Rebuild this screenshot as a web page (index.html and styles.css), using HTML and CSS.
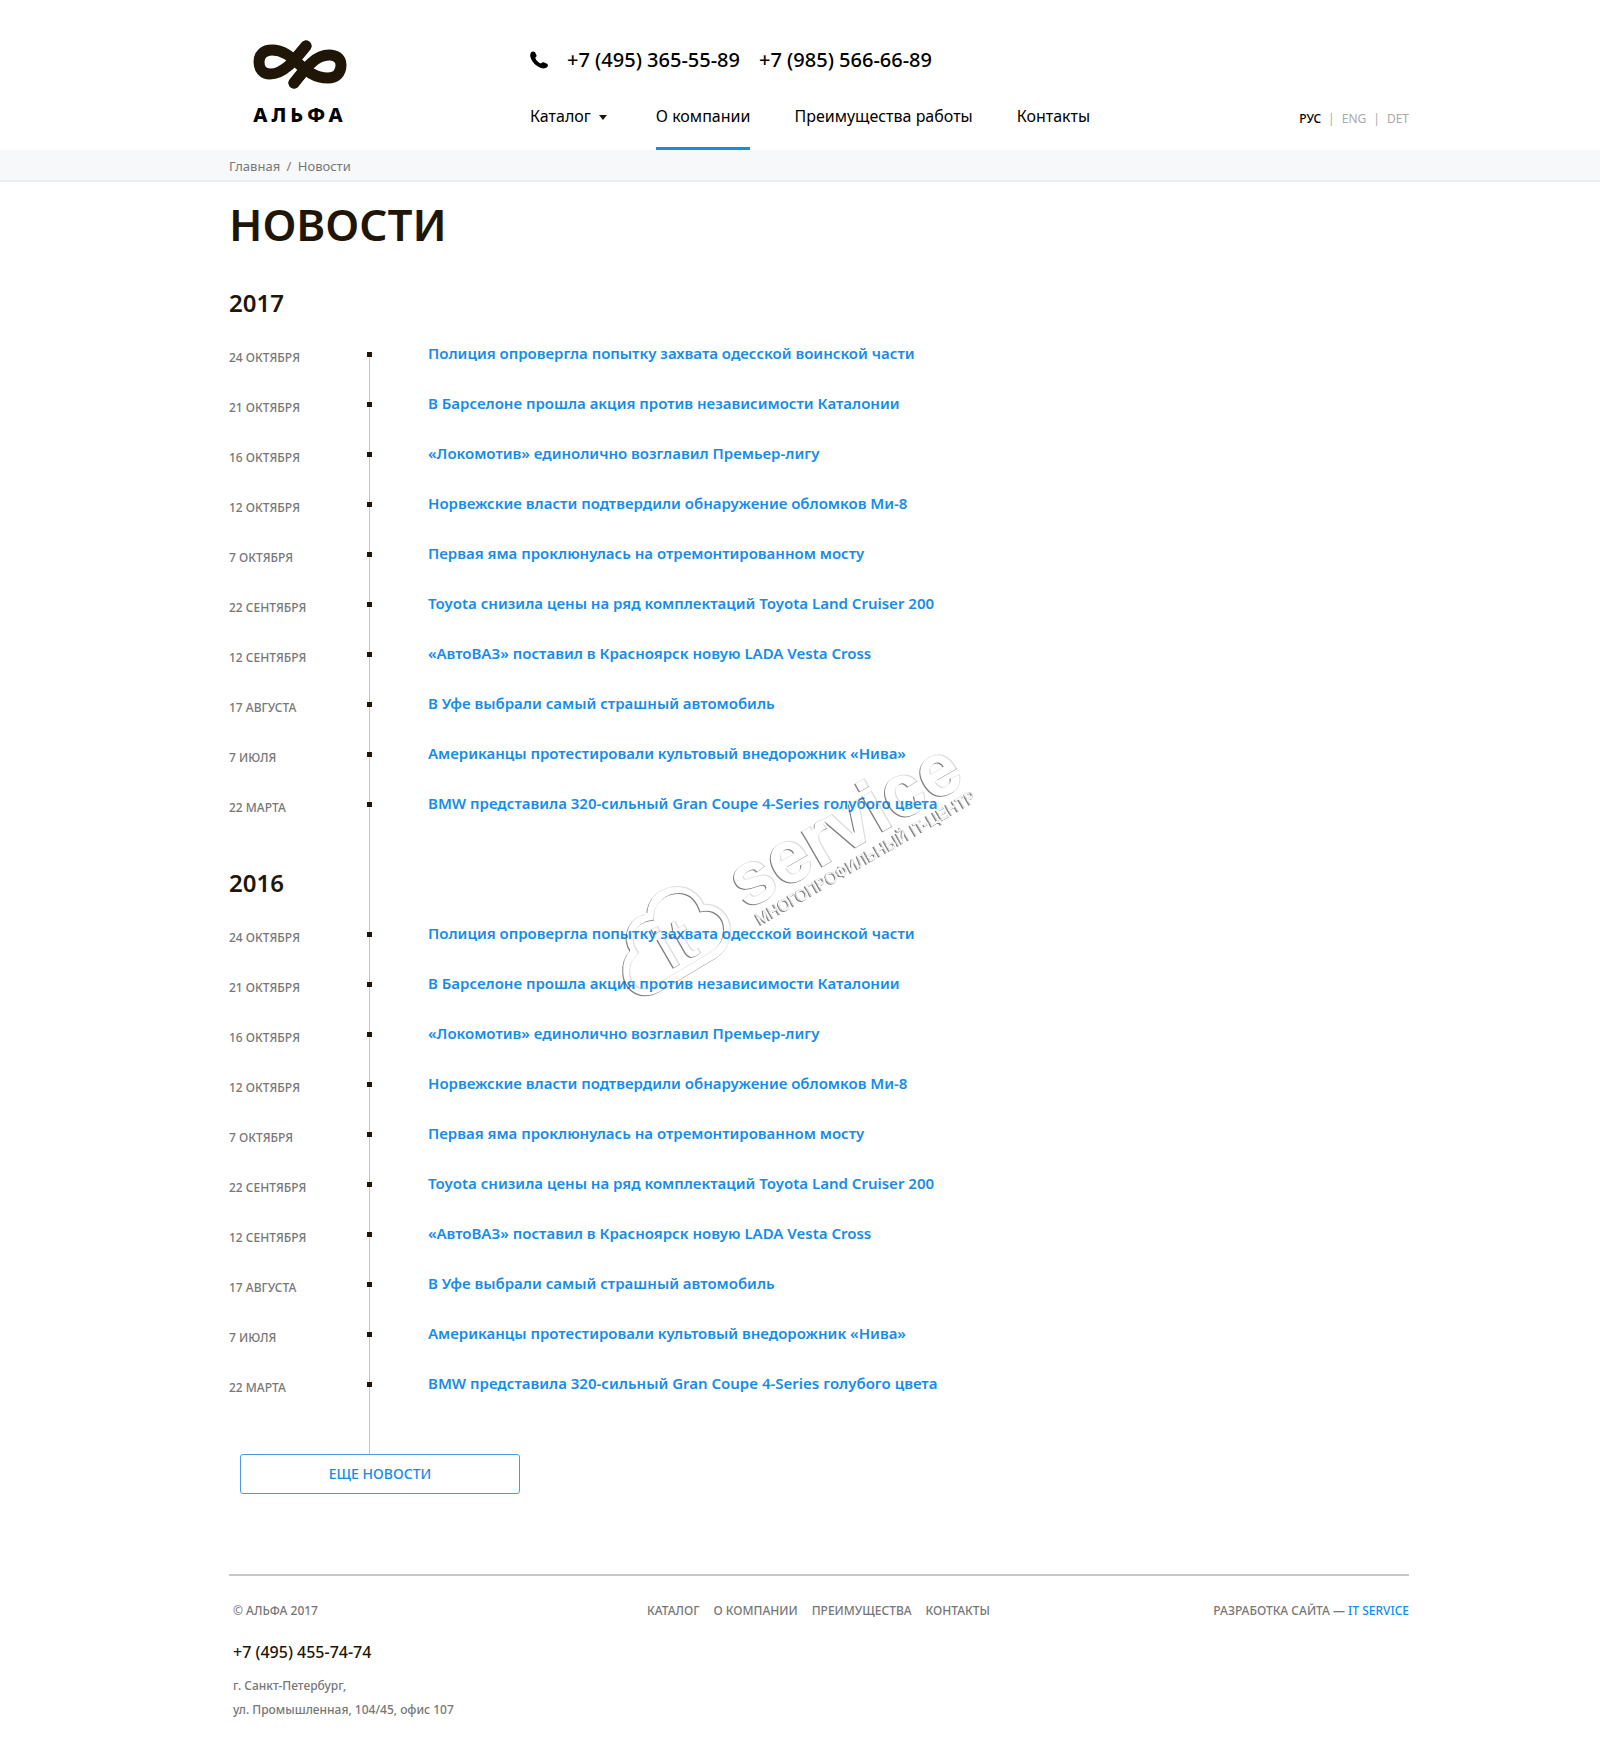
FILE: index.html
```
<!DOCTYPE html>
<html lang="ru">
<head>
    <meta charset="UTF-8">
    <meta name="viewport" content="width=device-width, initial-scale=1.0">
    <title>Новости — Альфа</title>
    <link rel="stylesheet" href="styles.css">
</head>
<body>
    <header class="container header">
        <a class="logo" href="#">
            <svg class="logo-mark" viewBox="0 0 94 49" aria-hidden="true">
                <path d="M53 6 L41 20 M53 28 L41 43" />
                <path d="M53 6 C42 20 31 34 17 34 C10 34 6 29 6 22 C6 14 11 10 19 10 C42 10 49 38 75 38 C83 38 88 33 88 25 C88 18 83 15 76 15 C62 15 52 29 41 43" />
            </svg>
            <span class="logo-text">АЛЬФА</span>
        </a>
        <div class="header-main">
            <div class="phones">
                <svg class="phone-icon" viewBox="0 0 18 18" aria-hidden="true">
                    <path d="M1 1.5C2 .2 4 0 5 1.3L6.4 4C6.9 5 6.4 6 5.2 6.8C6 9.5 8.500 11.800 11 12.600C11.800 11.500 12.700 11 13.700 11.300L17 12.800C18.300 13.600 18.200 15 17.200 16C15.500 17.700 13 17.800 10.500 16.800C6 15 2 11 .6 6.500C0 4.500.1 2.700 1 1.500Z" />
                </svg>
                <a href="tel:+74953655589">+7 (495) 365-55-89</a>
                <a href="tel:+79855666689">+7 (985) 566-66-89</a>
            </div>
            <nav class="menu">
                <a class="has-sub" href="#">Каталог</a>
                <a class="active" href="#">О компании</a>
                <a href="#">Преимущества работы</a>
                <a href="#">Контакты</a>
            </nav>
        </div>
        <div class="langs">
            <a class="current" href="#">РУС</a>
            <span>|</span>
            <a href="#">ENG</a>
            <span>|</span>
            <a href="#">DET</a>
        </div>
    </header>

    <div class="crumbs">
        <div class="container">
            <a href="#">Главная</a> <span class="sep">/</span> <span>Новости</span>
        </div>
    </div>

    <main class="container news">
        <h1>НОВОСТИ</h1>

        <div class="timeline">
            <section>
                <h2>2017</h2>
                <ul class="news-list">
                    <li><time>24 ОКТЯБРЯ</time><a href="#">Полиция опровергла попытку захвата одесской воинской части</a></li>
                    <li><time>21 ОКТЯБРЯ</time><a href="#">В Барселоне прошла акция против независимости Каталонии</a></li>
                    <li><time>16 ОКТЯБРЯ</time><a href="#">«Локомотив» единолично возглавил Премьер-лигу</a></li>
                    <li><time>12 ОКТЯБРЯ</time><a href="#">Норвежские власти подтвердили обнаружение обломков Ми-8</a></li>
                    <li><time>7 ОКТЯБРЯ</time><a href="#">Первая яма проклюнулась на отремонтированном мосту</a></li>
                    <li><time>22 СЕНТЯБРЯ</time><a href="#">Toyota снизила цены на ряд комплектаций Toyota Land Cruiser 200</a></li>
                    <li><time>12 СЕНТЯБРЯ</time><a href="#">«АвтоВАЗ» поставил в Красноярск новую LADA Vesta Cross</a></li>
                    <li><time>17 АВГУСТА</time><a href="#">В Уфе выбрали самый страшный автомобиль</a></li>
                    <li><time>7 ИЮЛЯ</time><a href="#">Американцы протестировали культовый внедорожник «Нива»</a></li>
                    <li><time>22 МАРТА</time><a href="#">BMW представила 320-сильный Gran Coupe 4-Series голубого цвета</a></li>
                </ul>
            </section>
            <section>
                <h2>2016</h2>
                <ul class="news-list">
                    <li><time>24 ОКТЯБРЯ</time><a href="#">Полиция опровергла попытку захвата одесской воинской части</a></li>
                    <li><time>21 ОКТЯБРЯ</time><a href="#">В Барселоне прошла акция против независимости Каталонии</a></li>
                    <li><time>16 ОКТЯБРЯ</time><a href="#">«Локомотив» единолично возглавил Премьер-лигу</a></li>
                    <li><time>12 ОКТЯБРЯ</time><a href="#">Норвежские власти подтвердили обнаружение обломков Ми-8</a></li>
                    <li><time>7 ОКТЯБРЯ</time><a href="#">Первая яма проклюнулась на отремонтированном мосту</a></li>
                    <li><time>22 СЕНТЯБРЯ</time><a href="#">Toyota снизила цены на ряд комплектаций Toyota Land Cruiser 200</a></li>
                    <li><time>12 СЕНТЯБРЯ</time><a href="#">«АвтоВАЗ» поставил в Красноярск новую LADA Vesta Cross</a></li>
                    <li><time>17 АВГУСТА</time><a href="#">В Уфе выбрали самый страшный автомобиль</a></li>
                    <li><time>7 ИЮЛЯ</time><a href="#">Американцы протестировали культовый внедорожник «Нива»</a></li>
                    <li><time>22 МАРТА</time><a href="#">BMW представила 320-сильный Gran Coupe 4-Series голубого цвета</a></li>
                </ul>
            </section>
        </div>
        <button class="more" type="button">ЕЩЕ НОВОСТИ</button>

        <!-- watermark -->
        <svg class="watermark" viewBox="0 0 400 280">
            <defs>
                <filter id="emboss" x="-10%" y="-10%" width="120%" height="120%">
                    <feOffset in="SourceAlpha" dx="1" dy="-1" result="up" />
                    <feComposite in="SourceAlpha" in2="up" operator="out" result="dark" />
                    <feFlood flood-color="#555" flood-opacity=".75" />
                    <feComposite in2="dark" operator="in" result="darkEdge" />
                    <feOffset in="SourceAlpha" dx="-1" dy="1" result="down" />
                    <feComposite in="SourceAlpha" in2="down" operator="out" result="light" />
                    <feFlood flood-color="#bbb" flood-opacity=".5" />
                    <feComposite in2="light" operator="in" result="lightEdge" />
                    <feMerge>
                        <feMergeNode in="lightEdge" />
                        <feMergeNode in="darkEdge" />
                    </feMerge>
                </filter>
            </defs>
            <g filter="url(#emboss)">
                <path class="cloud" d="M38 259C24 253 22 232 34 220C24 204 32 188 50 185C50 168 64 158 78 158C90 158 98 166 102 176C116 174 127 184 127 198C127 210 122 218 112 224L60 255C52 260 45 262 38 259Z" />
                <text class="wm-it" transform="translate(69 239) rotate(-30)">it</text>
                <text class="wm-name" transform="translate(146 178) rotate(-30)">service</text>
                <text class="wm-tag" transform="translate(159 194) rotate(-30)">МНОГОПРОФИЛЬНЫЙ IT-ЦЕНТР</text>
            </g>
        </svg>
    </main>

    <footer class="container footer">
        <div class="footer-about">
            <p>© АЛЬФА 2017</p>
            <a class="footer-phone" href="tel:+74954557474">+7 (495) 455-74-74</a>
            <address>г. Санкт-Петербург,<br>ул. Промышленная, 104/45, офис 107</address>
        </div>
        <nav class="footer-menu">
            <a href="#">КАТАЛОГ</a>
            <a href="#">О КОМПАНИИ</a>
            <a href="#">ПРЕИМУЩЕСТВА</a>
            <a href="#">КОНТАКТЫ</a>
        </nav>
        <p class="dev">РАЗРАБОТКА САЙТА — <a href="#">IT SERVICE</a></p>
    </footer>
</body>
</html>
```
FILE: styles.css
```
* {
    box-sizing: border-box;
}

body {
    margin: 0;
    background: #fff;
    color: #000;
    font-family: "Noto Sans", "Open Sans", sans-serif;
    font-size: 16px;
}

a {
    color: inherit;
    text-decoration: none;
}

p, h1, h2, ul {
    margin: 0;
    padding: 0;
}

.container {
    width: 100%;
    max-width: 1180px;
    margin: 0 auto;
}

/* the content column sits a little to the right of the centre */
.header, .news, .footer, .crumbs .container {
    position: relative;
    left: 19px;
}

/* header */
.header {
    display: grid;
    grid-template-columns: 301px 1fr auto;
    height: 150px;
}

.logo {
    width: 94px;
    margin: 40px 0 0 24px;
}

.logo-mark {
    display: block;
    width: 94px;
    height: 49px;
}

.logo-mark path {
    fill: none;
    stroke: #1f1607;
    stroke-width: 11;
    stroke-linecap: round;
    stroke-linejoin: round;
}

.logo-text {
    display: block;
    margin-top: 12px;
    font-size: 20px;
    font-weight: 800;
    line-height: 28px;
    letter-spacing: 4px;
    text-align: center;
}

.header-main {
    display: flex;
    flex-direction: column;
    justify-content: space-between;
}

.phones {
    display: flex;
    align-items: center;
    gap: 19px;
    margin-top: 44px;
    font-size: 20px;
    font-weight: 500;
    line-height: 32px;
}

.phone-icon {
    width: 18px;
    height: 18px;
}

.menu {
    display: flex;
    gap: 44px;
    line-height: 24px;
}

.menu a {
    padding: 4px 0 19px;
    border-bottom: 3px solid transparent;
}

.menu .active {
    border-color: #158ceb;
}

.has-sub::after {
    content: "";
    display: inline-block;
    margin: 0 5px 2px 8px;
    border: 4px solid transparent;
    border-top: 5px solid #1f1607;
    border-bottom: 0;
}

.langs {
    display: flex;
    gap: 7px;
    align-self: end;
    padding-bottom: 21px;
    color: #aaa;
    font-size: 12px;
    line-height: 20px;
}

.langs .current {
    color: #000;
    font-weight: 500;
}

/* breadcrumbs */
.crumbs {
    padding-top: 2px;
    background: #f7f8fa;
    border-bottom: 2px solid #eceef1;
    color: #777;
    font-size: 13px;
    line-height: 28px;
}

.crumbs .sep {
    margin: 0 3px;
}

/* news */
.news h1 {
    padding-top: 12px;
    color: #1f1607;
    font-size: 44px;
    font-weight: 600;
    line-height: 60px;
}

.timeline {
    padding: 34px 0 46px;
    background: linear-gradient(#c4c4c4, #c4c4c4) 140px 100px / 1px 100% no-repeat;
}

.timeline section + section {
    margin-top: 40px;
}

.news h2 {
    padding-bottom: 10px;
    color: #1f1607;
    font-size: 24px;
    font-weight: 600;
    line-height: 30px;
}

.news-list {
    list-style: none;
}

.news-list li {
    display: grid;
    grid-template-columns: 199px 1fr;
    align-items: center;
    height: 50px;
    background: linear-gradient(#1f1607, #1f1607) 138px 24px / 5px 5px no-repeat;
}

.news-list time {
    padding-top: 8px;
    color: #777;
    font-size: 12px;
    font-weight: 500;
}

.news-list a {
    justify-self: start;
    color: #158ceb;
    font-size: 15px;
    font-weight: 600;
}

.more {
    display: block;
    width: 280px;
    height: 40px;
    margin-left: 11px;
    padding: 0 0 2px;
    border: 1px solid #4a9ae6;
    border-radius: 3px;
    background: #fff;
    color: #158ceb;
    font: 500 14px "Noto Sans", "Open Sans", sans-serif;
    cursor: pointer;
}

.watermark {
    position: absolute;
    top: 550px;
    left: 371px;
    width: 400px;
    height: 280px;
    overflow: visible;
    pointer-events: none;
}

.cloud {
    fill: none;
    stroke: #000;
    stroke-width: 8;
}

.wm-it {
    font: 700 62px "Liberation Sans", sans-serif;
}

.wm-name {
    font: 700 74px "Liberation Sans", sans-serif;
    stroke: #000;
    stroke-width: 2;
}

.wm-tag {
    font: 400 16px "Liberation Sans", sans-serif;
    stroke: #000;
    stroke-width: 1;
}

/* footer */
.footer {
    display: grid;
    grid-template-columns: 418px 1fr auto;
    margin-top: 80px;
    padding: 23px 0 24px;
    border-top: 2px solid #c8c8c8;
    color: #777;
    font-size: 12px;
    font-weight: 500;
    line-height: 24px;
}

.footer-about {
    padding-left: 4px;
}

.footer-phone {
    display: block;
    margin: 17px 0 10px;
    color: #1f1607;
    font-size: 16px;
    font-weight: 500;
}

.footer address {
    font-style: normal;
}

.footer-menu {
    display: flex;
    align-items: start;
    gap: 14px;
}

.dev a {
    color: #158ceb;
}
```
